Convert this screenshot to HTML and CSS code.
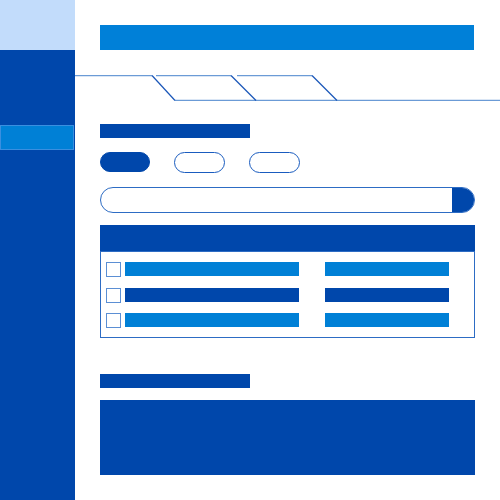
FILE: index.html
```html
<!DOCTYPE html>
<html>
<head>
<meta charset="utf-8">
<link rel="stylesheet" href="styles.css">
</head>
<body>
<div class="app">
  <aside class="sidebar">
    <div class="brand"></div>
    <div class="nav">
      <div class="nav-item active"></div>
    </div>
  </aside>
  <main class="main">
    <div class="topbar"></div>
    <svg class="tabs" width="425" height="26" viewBox="0 0 425 26">
      <g class="tab-line">
        <line x1="0" y1="0.5" x2="77" y2="0.5"/>
        <line x1="81" y1="0.5" x2="156" y2="0.5"/>
        <line x1="162" y1="0.5" x2="237" y2="0.5"/>
        <line x1="100" y1="25.5" x2="425" y2="25.5"/>
      </g>
      <g class="tab-edge">
        <line x1="77" y1="0.5" x2="100" y2="25.5"/>
        <line x1="156" y1="0.5" x2="181" y2="25.5"/>
        <line x1="237" y1="0.5" x2="262" y2="25.5"/>
      </g>
    </svg>
    <section class="content">
      <div class="heading"></div>
      <div class="pills">
        <span class="pill filled"></span>
        <span class="pill"></span>
        <span class="pill"></span>
      </div>
      <div class="search">
        <span class="search-field"></span>
        <span class="search-btn"></span>
      </div>
      <div class="table">
        <div class="table-head"></div>
        <div class="table-body">
          <div class="row">
            <span class="check"></span>
            <span class="cell wide light"></span>
            <span class="cell narrow light"></span>
          </div>
          <div class="row">
            <span class="check"></span>
            <span class="cell wide dark"></span>
            <span class="cell narrow dark"></span>
          </div>
          <div class="row">
            <span class="check"></span>
            <span class="cell wide light"></span>
            <span class="cell narrow light"></span>
          </div>
        </div>
      </div>
      <div class="heading heading-2"></div>
      <div class="panel"></div>
    </section>
  </main>
</div>
</body>
</html>
```

FILE: styles.css
```css
html, body {
  margin: 0;
  padding: 0;
  background: #ffffff;
  font-family: "Liberation Sans", Arial, sans-serif;
}

.app {
  display: flex;
  width: 500px;
  height: 500px;
  overflow: hidden;
}

.sidebar {
  width: 75px;
  flex: none;
  display: flex;
  flex-direction: column;
  background: #0047ab;
}

.brand {
  height: 50px;
  background: #c2dcfb;
}

.nav {
  padding-top: 75px;
}

.nav-item {
  height: 25px;
  width: 74px;
  box-sizing: border-box;
}

.nav-item.active {
  background: #0080d6;
  border: 1px solid #3a8fe0;
}

.main {
  flex: 1;
  display: flex;
  flex-direction: column;
  padding-top: 25px;
}

.topbar {
  height: 25px;
  margin: 0 26px 0 25px;
  background: #0080d8;
}

.tabs {
  display: block;
  margin-top: 25px;
}

.tab-line line {
  stroke: #6b9bd6;
  stroke-width: 1.5;
}

.tab-edge line {
  stroke: #1a56b8;
  stroke-width: 1.2;
}

.content {
  display: flex;
  flex-direction: column;
  padding: 0 25px;
}

.heading {
  width: 150px;
  height: 14px;
  margin-top: 23px;
  background: #0047ab;
}

.heading-2 {
  margin-top: 36px;
}

.pills {
  display: flex;
  gap: 24px;
  margin-top: 14px;
}

.pill {
  width: 51px;
  height: 21px;
  box-sizing: border-box;
  border: 1.3px solid #1a5cbf;
  border-radius: 11px;
  background: #ffffff;
}

.pill.filled {
  width: 50px;
  height: 20px;
  background: #0047ab;
  border-color: #0047ab;
}

.search {
  display: flex;
  height: 26px;
  margin-top: 14px;
  box-sizing: border-box;
  border: 1.5px solid #2d6cc4;
  border-radius: 13px;
  overflow: hidden;
}

.search-field {
  flex: 1;
}

.search-btn {
  width: 22px;
  background: #0047ab;
}

.table {
  margin-top: 12px;
  display: flex;
  flex-direction: column;
}

.table-head {
  height: 27px;
  background: #0047ab;
  border-bottom: 1px solid #2d6cc4;
  box-sizing: border-box;
}

.table-body {
  display: flex;
  flex-direction: column;
  gap: 11.5px;
  padding: 10px 0 10px 5px;
  border: 1px solid #2d6cc4;
  border-top: none;
}

.row {
  display: flex;
  align-items: flex-start;
  height: 14px;
}

.check {
  width: 15px;
  height: 15px;
  box-sizing: border-box;
  border: 1.5px solid #5b8fd4;
  background: #ffffff;
  flex: none;
}

.cell {
  height: 14px;
  flex: none;
}

.cell.wide {
  width: 174px;
  margin-left: 4px;
}

.cell.narrow {
  width: 124px;
  margin-left: 26px;
}

.cell.light {
  background: #0080d6;
}

.cell.dark {
  background: #0047ab;
}

.panel {
  height: 75px;
  margin-top: 12px;
  background: #0047ab;
}
```
